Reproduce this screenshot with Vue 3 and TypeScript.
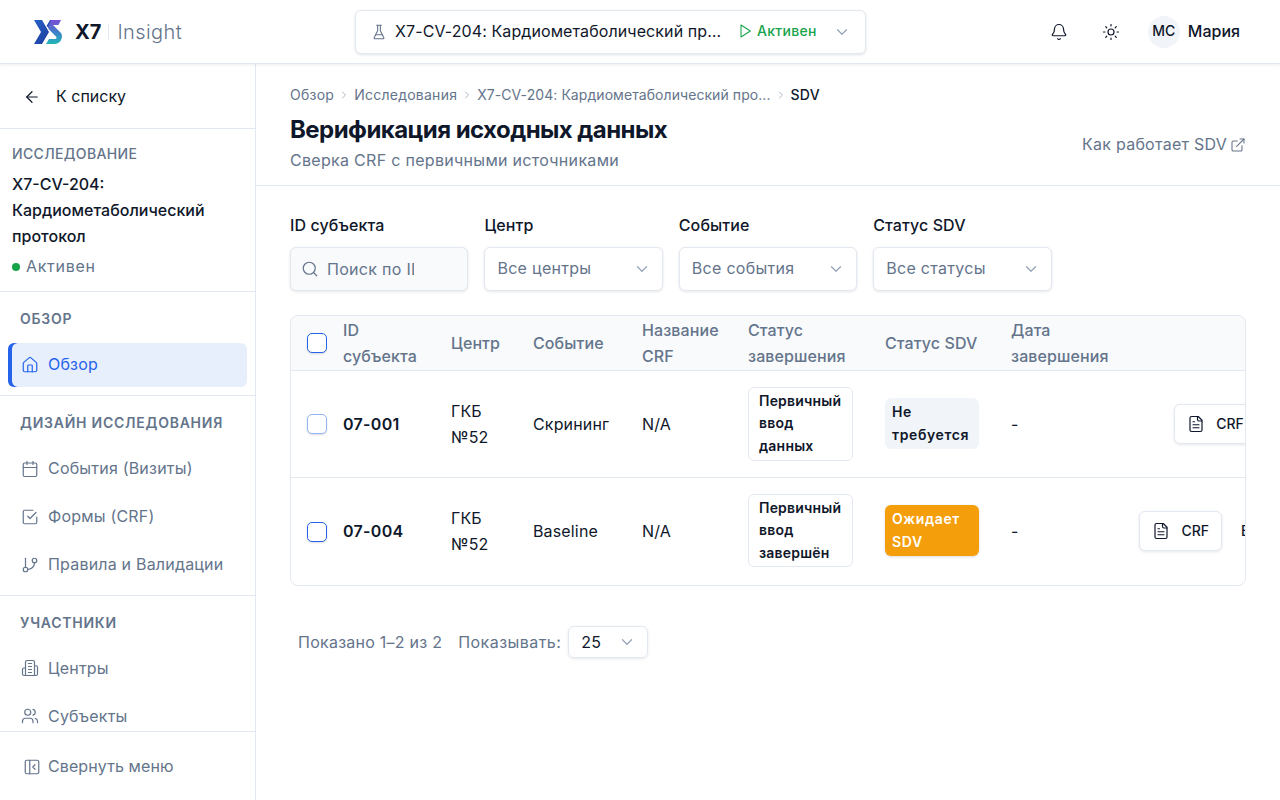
<script setup lang="ts">
// Верификация исходных данных (SDV): шапка, меню исследования, фильтры и таблица
const circle = (cx: number, cy: number, r: number) =>
  `M${cx - r} ${cy}a${r} ${r} 0 1 0 ${r * 2} 0a${r} ${r} 0 1 0 ${-r * 2} 0z`;

const box = 'M5 3h14a2 2 0 0 1 2 2v14a2 2 0 0 1-2 2H5a2 2 0 0 1-2-2V5a2 2 0 0 1 2-2z';

const icons: Record<string, string[]> = {
  home: ['M15 21v-8a1 1 0 0 0-1-1h-4a1 1 0 0 0-1 1v8', 'M3 10a2 2 0 0 1 .709-1.528l7-5.999a2 2 0 0 1 2.582 0l7 5.999A2 2 0 0 1 21 10v9a2 2 0 0 1-2 2H5a2 2 0 0 1-2-2z'],
  calendar: ['M8 2v4', 'M16 2v4', 'M5 4h14a2 2 0 0 1 2 2v14a2 2 0 0 1-2 2H5a2 2 0 0 1-2-2V6a2 2 0 0 1 2-2z', 'M3 10h18'],
  check: ['m9 11 3 3 8-8', 'M21 12v7a2 2 0 0 1-2 2H5a2 2 0 0 1-2-2V5a2 2 0 0 1 2-2h11'],
  branch: ['M6 3v12', circle(18, 6, 3), circle(6, 18, 3), 'M18 9a9 9 0 0 1-9 9'],
  building: ['M6 22V4a2 2 0 0 1 2-2h8a2 2 0 0 1 2 2v18Z', 'M6 12H4a2 2 0 0 0-2 2v6a2 2 0 0 0 2 2h2', 'M18 9h2a2 2 0 0 1 2 2v9a2 2 0 0 1-2 2h-2', 'M10 6h4', 'M10 10h4', 'M10 14h4', 'M10 18h4'],
  users: ['M16 21v-2a4 4 0 0 0-4-4H6a4 4 0 0 0-4 4v2', circle(9, 7, 4), 'M22 21v-2a4 4 0 0 0-3-3.87', 'M16 3.13a4 4 0 0 1 0 7.75'],
  collapse: [box, 'M9 3v18', 'm16 15-3-3 3-3'],
  back: ['m12 19-7-7 7-7', 'M19 12H5'],
  flask: ['M10 2v7.527a2 2 0 0 1-.211.896L4.72 20.55a1 1 0 0 0 .9 1.45h12.76a1 1 0 0 0 .9-1.45l-5.069-10.127A2 2 0 0 1 14 9.527V2', 'M8.5 2h7', 'M7 16h10'],
  play: ['M6 3l14 9-14 9z'],
  down: ['m6 9 6 6 6-6'],
  right: ['m9 18 6-6-6-6'],
  bell: ['M10.268 21a2 2 0 0 0 3.464 0', 'M3.262 15.326A1 1 0 0 0 4 17h16a1 1 0 0 0 .74-1.673C19.41 13.956 18 12.499 18 8A6 6 0 0 0 6 8c0 4.499-1.411 5.956-2.738 7.326'],
  sun: [circle(12, 12, 4), 'M12 2v2', 'M12 20v2', 'm4.93 4.93 1.41 1.41', 'm17.66 17.66 1.41 1.41', 'M2 12h2', 'M20 12h2', 'm6.34 17.66-1.41 1.41', 'm19.07 4.93-1.41 1.41'],
  external: ['M15 3h6v6', 'M10 14 21 3', 'M18 13v6a2 2 0 0 1-2 2H5a2 2 0 0 1-2-2V8a2 2 0 0 1 2-2h6'],
  search: ['m21 21-4.34-4.34', circle(11, 11, 8)],
  file: ['M15 2H6a2 2 0 0 0-2 2v16a2 2 0 0 0 2 2h12a2 2 0 0 0 2-2V7Z', 'M14 2v4a2 2 0 0 0 2 2h4', 'M10 9H8', 'M16 13H8', 'M16 17H8']
};

const menu = [
  { title: 'Обзор', items: [{ label: 'Обзор', icon: 'home', active: true }] },
  {
    title: 'Дизайн исследования',
    items: [
      { label: 'События (Визиты)', icon: 'calendar', active: false },
      { label: 'Формы (CRF)', icon: 'check', active: false },
      { label: 'Правила и Валидации', icon: 'branch', active: false }
    ]
  },
  {
    title: 'Участники',
    items: [
      { label: 'Центры', icon: 'building', active: false },
      { label: 'Субъекты', icon: 'users', active: false }
    ]
  }
];

const crumbs = ['Обзор', 'Исследования', 'X7-CV-204: Кардиометаболический про...'];
const filters = [
  { label: 'Центр', value: 'Все центры' },
  { label: 'Событие', value: 'Все события' },
  { label: 'Статус SDV', value: 'Все статусы' }
];
const rows = [
  { id: '07-001', site: 'ГКБ №52', event: 'Скрининг', status: 'Первичный ввод данных', sdv: 'Не требуется', pending: false, soft: true, extra: '' },
  { id: '07-004', site: 'ГКБ №52', event: 'Baseline', status: 'Первичный ввод завершён', sdv: 'Ожидает SDV', pending: true, soft: false, extra: 'Ввод' }
];
</script>

<template>
  <div class="app">
    <header class="topbar">
      <div class="brand">
        <svg class="logo" viewBox="0 0 30 24" width="30" height="24">
          <defs>
            <linearGradient id="logoX" x1="0" y1="0" x2="1" y2="1">
              <stop offset="0" stop-color="#2563c9" />
              <stop offset="1" stop-color="#1e3a9a" />
            </linearGradient>
            <linearGradient id="logoS" x1="0" y1="0" x2="0" y2="1">
              <stop offset="0" stop-color="#7c4dd6" />
              <stop offset="0.5" stop-color="#3f7fc9" />
              <stop offset="1" stop-color="#22b8b8" />
            </linearGradient>
          </defs>
          <path d="M1 0h8l7 12-7 12H1l7-12z" fill="url(#logoX)" />
          <path d="M16.500 8.500 21 0h-4l-3.500 6z" fill="#1f4fb5" />
          <path d="M18 0h10l-2.500 5h-5.500l7.500 7.500c2.500 2.500 1.500 7-.5 9-1.300 1.500-3 2.500-5 2.500h-9l3-5h6c1.500 0 2-1.500 1-2.500l-7-7c-1-1-1-2.500 0-4.500z" fill="url(#logoS)" />
        </svg>
        <span class="brand-name">X7</span>
        <span class="brand-sep"></span>
        <span class="brand-product">Insight</span>
      </div>

      <div class="study-select">
        <svg class="icon flask" viewBox="0 0 24 24"><path v-for="d in icons.flask" :key="d" :d="d" /></svg>
        <span class="study-name">X7-CV-204: Кардиометаболический протокол</span>
        <span class="study-state">
          <svg class="icon" viewBox="0 0 24 24"><path v-for="d in icons.play" :key="d" :d="d" /></svg>
          Активен
        </span>
        <svg class="icon chevron" viewBox="0 0 24 24"><path v-for="d in icons.down" :key="d" :d="d" /></svg>
      </div>

      <div class="top-actions">
        <span class="icon-btn"><svg class="icon" viewBox="0 0 24 24"><path v-for="d in icons.bell" :key="d" :d="d" /></svg></span>
        <span class="icon-btn"><svg class="icon" viewBox="0 0 24 24"><path v-for="d in icons.sun" :key="d" :d="d" /></svg></span>
        <div class="user">
          <span class="avatar">МС</span>
          <span class="user-name">Мария</span>
        </div>
      </div>
    </header>

    <div class="layout">
      <aside class="sidebar">
        <div class="sidebar-scroll">
          <div class="back-row">
            <svg class="icon" viewBox="0 0 24 24"><path v-for="d in icons.back" :key="d" :d="d" /></svg>
            <span>К списку</span>
          </div>
          <div class="study-card">
            <div class="study-card-title">Исследование</div>
            <div class="study-card-name">X7-CV-204: Кардиометаболический протокол</div>
            <div class="study-card-state"><i class="dot"></i>Активен</div>
          </div>
          <nav v-for="group in menu" :key="group.title" class="nav-group">
            <div class="nav-title">{{ group.title }}</div>
            <a v-for="item in group.items" :key="item.label" class="nav-item" :class="{ active: item.active }">
              <svg class="icon" viewBox="0 0 24 24"><path v-for="d in icons[item.icon]" :key="d" :d="d" /></svg>
              {{ item.label }}
            </a>
          </nav>
        </div>
        <div class="sidebar-footer">
          <svg class="icon" viewBox="0 0 24 24"><path v-for="d in icons.collapse" :key="d" :d="d" /></svg>
          Свернуть меню
        </div>
      </aside>

      <main class="main">
        <section class="page-head">
          <div class="crumbs">
            <template v-for="c in crumbs" :key="c">
              <span :class="{ 'crumb-long': c.length > 20 }">{{ c }}</span>
              <svg class="icon crumb-sep" viewBox="0 0 24 24"><path v-for="d in icons.right" :key="d" :d="d" /></svg>
            </template>
            <span class="crumb-current">SDV</span>
          </div>
          <div class="title-row">
            <div>
              <h1>Верификация исходных данных</h1>
              <p>Сверка CRF с первичными источниками</p>
            </div>
            <a class="help-link">
              Как работает SDV
              <svg class="icon" viewBox="0 0 24 24"><path v-for="d in icons.external" :key="d" :d="d" /></svg>
            </a>
          </div>
        </section>

        <section class="content">
          <div class="filters">
            <label class="filter">
              <span class="filter-label">ID субъекта</span>
              <span class="search-box">
                <svg class="icon" viewBox="0 0 24 24"><path v-for="d in icons.search" :key="d" :d="d" /></svg>
                <input placeholder="Поиск по ID субъекта" />
              </span>
            </label>
            <div v-for="f in filters" :key="f.label" class="filter">
              <span class="filter-label">{{ f.label }}</span>
              <span class="select-box">
                {{ f.value }}
                <svg class="icon" viewBox="0 0 24 24"><path v-for="d in icons.down" :key="d" :d="d" /></svg>
              </span>
            </div>
          </div>

          <div class="table-wrap">
            <table>
              <colgroup>
                <col class="c-check" /><col class="c-id" /><col class="c-site" /><col class="c-event" />
                <col class="c-crf" /><col class="c-status" /><col class="c-sdv" /><col class="c-date" /><col class="c-actions" />
              </colgroup>
              <thead>
                <tr>
                  <th class="check-cell"><span class="checkbox"></span></th>
                  <th>ID субъекта</th>
                  <th>Центр</th>
                  <th>Событие</th>
                  <th>Название CRF</th>
                  <th>Статус завершения</th>
                  <th>Статус SDV</th>
                  <th>Дата завершения</th>
                  <th></th>
                </tr>
              </thead>
              <tbody>
                <tr v-for="row in rows" :key="row.id">
                  <td class="check-cell"><span class="checkbox" :class="{ soft: row.soft }"></span></td>
                  <td class="cell-text subject">{{ row.id }}</td>
                  <td class="cell-text">{{ row.site }}</td>
                  <td class="cell-text">{{ row.event }}</td>
                  <td class="cell-text">N/A</td>
                  <td><span class="status-badge">{{ row.status }}</span></td>
                  <td><span class="sdv-badge" :class="{ pending: row.pending }">{{ row.sdv }}</span></td>
                  <td class="cell-text">-</td>
                  <td>
                    <div class="row-actions">
                      <button class="row-btn">
                        <svg class="icon" viewBox="0 0 24 24"><path v-for="d in icons.file" :key="d" :d="d" /></svg>
                        CRF
                      </button>
                      <button v-if="row.extra" class="row-btn plain">{{ row.extra }}</button>
                    </div>
                  </td>
                </tr>
              </tbody>
            </table>
          </div>

          <div class="pager">
            <span>Показано 1–2 из 2</span>
            <span class="pager-size">Показывать:</span>
            <span class="pager-select">
              25
              <svg class="icon" viewBox="0 0 24 24"><path v-for="d in icons.down" :key="d" :d="d" /></svg>
            </span>
          </div>
        </section>
      </main>
    </div>
  </div>
</template>

<style scoped>
.app {
  height: 100vh;
  display: flex;
  flex-direction: column;
  overflow: hidden;
  background: #fff;
  color: #0f172a;
  font-family: Inter, "Noto Sans", sans-serif;
  font-size: 16px;
  line-height: 1.6;
}

.icon {
  width: 18px;
  height: 18px;
  flex: none;
  fill: none;
  stroke: currentColor;
  stroke-width: 1.6;
  stroke-linecap: round;
  stroke-linejoin: round;
}

/* шапка */
.topbar {
  height: 64px;
  flex: none;
  display: flex;
  align-items: center;
  position: relative;
  z-index: 2;
  padding: 0 40px 0 33px;
  box-sizing: border-box;
  border-bottom: 1px solid #e2e8f0;
  box-shadow: 0 1px 3px rgba(15, 23, 42, 0.08);
}

.brand {
  width: 322px;
  display: flex;
  align-items: center;
}

.logo {
  margin-right: 12px;
}

.brand-name {
  font-size: 20px;
  font-weight: 700;
}

.brand-sep {
  width: 1px;
  height: 16px;
  margin: 0 8px 0 7px;
  background: #e2e8f0;
}

.brand-product {
  font-size: 20px;
  font-weight: 300;
  letter-spacing: 0.4px;
  color: #64748b;
}

.study-select {
  width: 511px;
  height: 44px;
  box-sizing: border-box;
  display: flex;
  align-items: center;
  padding: 0 14px 0 15px;
  background: #fff;
  border: 1px solid #e2e8f0;
  border-radius: 6px;
  box-shadow: 0 1px 3px rgba(15, 23, 42, 0.12);
}

.flask {
  width: 16px;
  height: 16px;
  color: #64748b;
  margin-right: 8px;
}

.study-name {
  width: 329px;
  white-space: nowrap;
  overflow: hidden;
  text-overflow: ellipsis;
  letter-spacing: 0.1px;
}

.study-state {
  display: flex;
  align-items: center;
  gap: 4px;
  margin-left: 13px;
  font-size: 14px;
  font-weight: 500;
  letter-spacing: 0.3px;
  color: #16a34a;
}

.study-state .icon {
  width: 16px;
  height: 16px;
}

.chevron {
  margin-left: auto;
  color: #94a3b8;
}

.top-actions {
  margin-left: auto;
  display: flex;
  align-items: center;
  gap: 16px;
  color: #0f172a;
}

.icon-btn {
  width: 36px;
  height: 36px;
  display: flex;
  align-items: center;
  justify-content: center;
}

.user {
  display: flex;
  align-items: center;
  gap: 8px;
  margin-left: 3px;
}

.avatar {
  width: 32px;
  height: 32px;
  display: flex;
  align-items: center;
  justify-content: center;
  border-radius: 50%;
  background: #f1f5f9;
  font-size: 14px;
  font-weight: 500;
}

.user-name {
  font-weight: 500;
}

.layout {
  flex: 1;
  min-height: 0;
  display: flex;
}

/* меню */
.sidebar {
  width: 256px;
  flex: none;
  box-sizing: border-box;
  display: flex;
  flex-direction: column;
  border-right: 1px solid #e2e8f0;
}

.sidebar-scroll {
  flex: 1;
  min-height: 0;
  overflow: hidden;
}

.back-row {
  height: 65px;
  box-sizing: border-box;
  display: flex;
  align-items: center;
  gap: 15px;
  padding: 1px 0 0 23px;
  border-bottom: 1px solid #e2e8f0;
}

.study-card {
  padding: 14px 12px 11px;
  border-bottom: 1px solid #e2e8f0;
}

.study-card-title {
  font-size: 14px;
  font-weight: 500;
  letter-spacing: 0.35px;
  text-transform: uppercase;
  color: #64748b;
  margin-bottom: 7px;
}

.study-card-name {
  font-weight: 500;
}

.study-card-state {
  display: flex;
  align-items: center;
  gap: 6px;
  margin-top: 5px;
  letter-spacing: 0.7px;
  color: #64748b;
}

.dot {
  width: 8px;
  height: 8px;
  border-radius: 50%;
  background: #16a34a;
}

.nav-group {
  padding: 16.5px 8px 4px;
  border-bottom: 1px solid #e2e8f0;
}

.nav-group:last-child {
  border-bottom: 0;
}

.nav-title {
  padding: 0 12px;
  margin-bottom: 12px;
  font-size: 14px;
  font-weight: 600;
  letter-spacing: 0.75px;
  text-transform: uppercase;
  color: #64748b;
}

.nav-item {
  height: 44px;
  box-sizing: border-box;
  display: flex;
  align-items: center;
  gap: 9px;
  padding-left: 13px;
  margin-bottom: 4px;
  border-radius: 6px;
  letter-spacing: 0.2px;
  color: #64748b;
}

.nav-item.active {
  background: #e8effc;
  color: #2563eb;
  box-shadow: inset 4px 0 0 #2563eb;
}

.sidebar-footer {
  height: 69px;
  flex: none;
  box-sizing: border-box;
  display: flex;
  align-items: center;
  gap: 7px;
  padding: 1px 0 0 23px;
  border-top: 1px solid #e2e8f0;
  letter-spacing: 0.1px;
  color: #64748b;
}

/* страница */
.main {
  flex: 1;
  min-width: 0;
}

.page-head {
  padding: 20px 34px 11px;
  border-bottom: 1px solid #e2e8f0;
}

.crumbs {
  display: flex;
  align-items: center;
  gap: 4px;
  font-size: 14px;
  letter-spacing: 0.25px;
  color: #64748b;
}

.crumb-long {
  letter-spacing: 0.07px;
}

.crumb-sep {
  width: 12px;
  height: 12px;
  color: #94a3b8;
}

.crumb-current {
  color: #0f172a;
  font-weight: 500;
}

.title-row {
  display: flex;
  align-items: flex-end;
  justify-content: space-between;
  margin-top: 8px;
}

h1 {
  margin: 0;
  font-size: 24px;
  font-weight: 700;
  line-height: 32px;
  letter-spacing: -0.55px;
}

.title-row p {
  margin: 2px 0 0;
  letter-spacing: 0.3px;
  color: #64748b;
}

.help-link {
  display: flex;
  align-items: center;
  gap: 3px;
  margin-bottom: 16px;
  letter-spacing: 0.25px;
  color: #64748b;
}

.help-link .icon {
  width: 16px;
  height: 16px;
}

.content {
  padding: 27px 34px;
}

.filters {
  display: grid;
  grid-template-columns: repeat(4, 178.4px);
  gap: 16px;
}

.filter {
  display: flex;
  flex-direction: column;
  gap: 8px;
}

.filter-label {
  font-weight: 500;
  letter-spacing: 0.1px;
}

.search-box,
.select-box {
  height: 44px;
  box-sizing: border-box;
  display: flex;
  align-items: center;
  border: 1px solid #e2e8f0;
  border-radius: 6px;
  box-shadow: 0 1px 3px rgba(15, 23, 42, 0.1);
  letter-spacing: 0.3px;
  color: #64748b;
}

.search-box {
  padding-left: 10px;
  background: #f8fafc;
}

.search-box input {
  flex: 1;
  min-width: 0;
  box-sizing: border-box;
  height: 100%;
  margin-left: 8px;
  padding: 0 53px 0 0;
  border: 0;
  outline: 0;
  background: transparent;
  font: inherit;
  letter-spacing: 0.3px;
}

.search-box input::placeholder {
  color: #64748b;
  opacity: 1;
}

.select-box {
  justify-content: space-between;
  padding: 1px 11px 0 12px;
  background: #fff;
}

.select-box .icon {
  color: #94a3b8;
}

/* таблица */
.table-wrap {
  margin-top: 24px;
  border: 1px solid #e2e8f0;
  border-radius: 8px;
  overflow: hidden;
}

table {
  width: 1016px;
  table-layout: fixed;
  border-collapse: separate;
  border-spacing: 0;
}

.c-check { width: 36px; }
.c-id { width: 108px; }
.c-site { width: 82px; }
.c-event { width: 109px; }
.c-crf { width: 106px; }
.c-status { width: 137px; }
.c-sdv { width: 126px; }
.c-date { width: 129px; }
.c-actions { width: 183px; }

th {
  height: 55px;
  padding: 2px 16px 0;
  box-sizing: border-box;
  text-align: left;
  font-weight: 500;
  letter-spacing: 0.1px;
  color: #64748b;
  background: #f8fafc;
  border-bottom: 1px solid #e2e8f0;
}

td {
  padding: 16px;
  border-bottom: 1px solid #e2e8f0;
  letter-spacing: 0.15px;
}

tbody tr:last-child td {
  padding-block: 16px 18px;
  border-bottom: 0;
}

td.cell-text {
  padding-block: 18px 16px;
}

tbody tr:last-child td.cell-text {
  padding-block: 17px;
}

tbody tr:last-child td.check-cell,
.check-cell {
  padding: 0 0 0 16px;
}

.checkbox {
  display: block;
  width: 20px;
  height: 20px;
  box-sizing: border-box;
  border: 1px solid #2563eb;
  border-radius: 5px;
  background: #fff;
  box-shadow: 0 1px 2px rgba(15, 23, 42, 0.15);
}

.checkbox.soft {
  border-color: #93b4f5;
}

.subject {
  font-weight: 600;
  letter-spacing: 0.3px;
}

.status-badge {
  display: block;
  padding: 2.4px 10px;
  border: 1px solid #e2e8f0;
  border-radius: 6px;
  font-size: 14px;
  font-weight: 600;
  letter-spacing: 0.2px;
}

.sdv-badge {
  display: block;
  padding: 3.5px 7px;
  border-radius: 6px;
  background: #f1f5f9;
  font-size: 14px;
  font-weight: 600;
  letter-spacing: 0.6px;
}

.sdv-badge.pending {
  background: #f59e0b;
  color: #fff;
  box-shadow: 0 1px 3px rgba(15, 23, 42, 0.15);
}

.row-actions {
  display: flex;
  justify-content: center;
  gap: 8px;
}

.row-btn {
  height: 40px;
  display: flex;
  align-items: center;
  gap: 11px;
  padding: 0 12px;
  background: #fff;
  border: 1px solid #e2e8f0;
  border-radius: 6px;
  box-shadow: 0 1px 3px rgba(15, 23, 42, 0.1);
  font: 500 14px Inter, "Noto Sans", sans-serif;
  color: #0f172a;
}

.row-btn.plain {
  border-color: transparent;
  box-shadow: none;
  padding: 0 15px 0 10px;
}

/* пагинация */
.pager {
  display: flex;
  align-items: center;
  margin-top: 40px;
  padding-left: 8px;
  letter-spacing: 0.25px;
  color: #64748b;
}

.pager-size {
  margin-left: 16px;
  letter-spacing: 0.45px;
}

.pager-select {
  width: 80px;
  height: 32px;
  box-sizing: border-box;
  display: flex;
  align-items: center;
  justify-content: space-between;
  margin-left: 7px;
  padding: 0 11px 0 12px;
  border: 1px solid #e2e8f0;
  border-radius: 6px;
  box-shadow: 0 1px 3px rgba(15, 23, 42, 0.1);
  color: #0f172a;
}

.pager-select .icon {
  color: #94a3b8;
}
</style>
